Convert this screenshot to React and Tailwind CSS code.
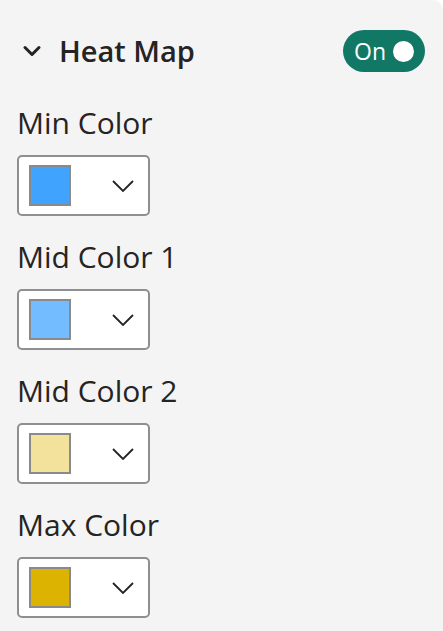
import { ChevronDown } from "lucide-react";

const colors = [
  { label: "Min Color", hex: "#40a4ff" },
  { label: "Mid Color 1", hex: "#73bcff" },
  { label: "Mid Color 2", hex: "#f2e29b" },
  { label: "Max Color", hex: "#dbb300" },
];

function ColorPicker({ label, hex }) {
  return (
    <div className="flex flex-col">
      <div className="text-[30px] leading-[36px] text-[#252423]">{label}</div>
      <button className="mt-[14px] flex h-[61px] w-[133px] items-center rounded-[5px] border-2 border-[#8f8f8f] bg-white pl-[10px]">
        <span
          className="h-[41px] w-[42px] border-2 border-[#8a8a8a]"
          style={{ backgroundColor: hex }}
        />
        <svg
          className="ml-[41px]"
          width="22"
          height="12"
          viewBox="0 0 22 12"
          fill="none"
          stroke="#252423"
          strokeWidth="1.8"
        >
          <path d="M1 1l10 10L21 1" />
        </svg>
      </button>
    </div>
  );
}

export default function App() {
  return (
    <div className="h-[631px] w-[443px] bg-white font-['Open_Sans',sans-serif]">
      <div className="h-full w-full rounded-tr-[10px] bg-[#f4f4f4] px-[17px] pt-[30px]">
        <div className="flex items-center justify-between">
          <div className="flex items-center">
            <ChevronDown className="ml-[1px] text-[#252423]" size={28} strokeWidth={2.6} />
            <span className="ml-[13px] text-[29px] font-semibold leading-[42px] text-[#252423]">
              Heat Map
            </span>
          </div>
          <div className="mr-[1px] flex h-[42px] w-[82px] items-center rounded-full bg-[#117865] pl-[11px]">
            <span className="text-[23px] leading-none text-white">On</span>
            <span className="ml-[7px] h-[21px] w-[21px] rounded-full bg-white" />
          </div>
        </div>
        <div className="mt-[33px] flex flex-col gap-[23px]">
          {colors.map((c) => (
            <ColorPicker key={c.label} {...c} />
          ))}
        </div>
      </div>
    </div>
  );
}
